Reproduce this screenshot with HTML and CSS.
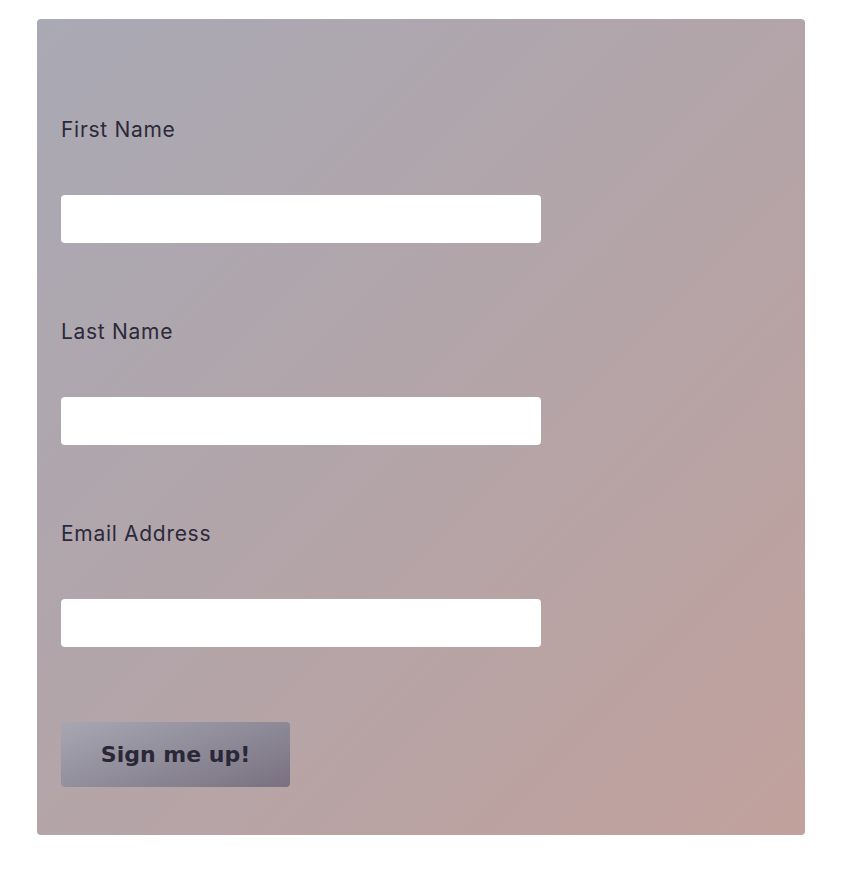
FILE: index.html
```html
<!DOCTYPE html>
<html lang="en">
<head>
<meta charset="utf-8">
<title>Sign up</title>
<link rel="stylesheet" href="styles.css">
</head>
<body>
<form class="card">
  <div class="field">
    <label class="label" for="fn">First Name</label>
    <input class="input" id="fn" type="text">
  </div>
  <div class="field">
    <label class="label" for="ln">Last Name</label>
    <input class="input" id="ln" type="text">
  </div>
  <div class="field">
    <label class="label" for="em">Email Address</label>
    <input class="input" id="em" type="email">
  </div>
  <button class="btn" type="button">Sign me up!</button>
</form>
</body>
</html>
```
FILE: styles.css
```css
html, body {
  margin: 0;
  padding: 0;
  background: #ffffff;
}
body {
  padding: 19px 0 0 37px;
  font-family: Inter, "Open Sans", sans-serif;
}
.card {
  width: 768px;
  box-sizing: border-box;
  padding: 96px 24px 48px;
  border-radius: 4px;
  background: linear-gradient(135deg, #a9a9b4 0%, #b2a5aa 45%, #c1a19c 100%);
  display: flex;
  flex-direction: column;
  align-items: flex-start;
}
.field {
  display: flex;
  flex-direction: column;
  margin-bottom: 74px;
}
.label {
  font-size: 21px;
  line-height: 30px;
  letter-spacing: 0.7px;
  color: #2c2a3a;
  margin-bottom: 50px;
}
.input {
  width: 480px;
  height: 48px;
  box-sizing: border-box;
  border: none;
  border-radius: 4px;
  background: #ffffff;
  margin: 0;
}
.field:last-of-type {
  margin-bottom: 75px;
}
.btn {
  width: 229px;
  height: 65px;
  border: none;
  border-radius: 4px;
  background: linear-gradient(160deg, #a7a7b2 0%, #908c9a 50%, #787080 100%);
  color: #2a2737;
  font-family: "DejaVu Sans", sans-serif;
  font-weight: bold;
  font-size: 22px;
  padding: 0;
}
```
